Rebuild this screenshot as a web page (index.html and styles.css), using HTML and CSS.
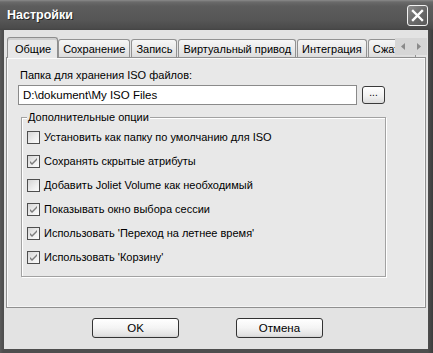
FILE: index.html
```html
<!DOCTYPE html>
<html lang="ru">
<head>
<meta charset="utf-8">
<title>Настройки</title>
<link rel="stylesheet" href="styles.css">
</head>
<body>
<div class="window">
  <div class="titlebar">
    <span class="title">Настройки</span>
    <div class="close">
      <svg width="19" height="19" viewBox="0 0 19 19"><path d="M5 5 L14 14 M14 5 L5 14" stroke="#fff" stroke-width="2.4" stroke-linecap="square"/></svg>
    </div>
  </div>
  <div class="client">
    <div class="tabstrip">
      <div class="tab active">Общие</div>
      <div class="tab">Сохранение</div>
      <div class="tab">Запись</div>
      <div class="tab">Виртуальный привод</div>
      <div class="tab">Интеграция</div>
      <div class="tab">Сжатие</div>
      <div class="tab-scroll">
        <svg width="32" height="17" viewBox="0 0 32 17"><path d="M10 5 L6 8.5 L10 12 Z" fill="#8a8a8a"/><path d="M22 5 L26 8.5 L22 12 Z" fill="#8a8a8a"/></svg>
      </div>
    </div>
    <div class="panel">
      <div class="field-label">Папка для хранения ISO файлов:</div>
      <div class="path-row">
        <div class="input">D:\dokument\My ISO Files</div>
        <div class="browse">...</div>
      </div>
      <div class="group">
        <div class="legend">Дополнительные опции</div>
        <div class="check-row"><span class="box"></span><span>Установить как папку по умолчанию для ISO</span></div>
        <div class="check-row"><span class="box checked"><svg width="11" height="11" viewBox="0 0 11 11"><path d="M2 5 L4 7 L9 2 L9 4 L4 9 L2 7 Z" fill="#7c7c7c"/></svg></span><span>Сохранять скрытые атрибуты</span></div>
        <div class="check-row"><span class="box"></span><span>Добавить Joliet Volume как необходимый</span></div>
        <div class="check-row"><span class="box checked"><svg width="11" height="11" viewBox="0 0 11 11"><path d="M2 5 L4 7 L9 2 L9 4 L4 9 L2 7 Z" fill="#7c7c7c"/></svg></span><span>Показывать окно выбора сессии</span></div>
        <div class="check-row"><span class="box checked"><svg width="11" height="11" viewBox="0 0 11 11"><path d="M2 5 L4 7 L9 2 L9 4 L4 9 L2 7 Z" fill="#7c7c7c"/></svg></span><span>Использовать 'Переход на летнее время'</span></div>
        <div class="check-row"><span class="box checked"><svg width="11" height="11" viewBox="0 0 11 11"><path d="M2 5 L4 7 L9 2 L9 4 L4 9 L2 7 Z" fill="#7c7c7c"/></svg></span><span>Использовать 'Корзину'</span></div>
      </div>
    </div>
    <div class="buttons">
      <div class="btn">OK</div>
      <div class="btn">Отмена</div>
    </div>
  </div>
</div>
</body>
</html>
```

FILE: styles.css
```css
* { box-sizing: border-box; }

html, body {
  margin: 0;
  padding: 0;
}

body {
  width: 433px;
  height: 353px;
  overflow: hidden;
  font-family: "Liberation Sans", Arial, sans-serif;
  font-size: 11px;
  line-height: 13px;
  color: #000;
  background: #4c4c4c;
}

.window {
  height: 353px;
  display: flex;
  flex-direction: column;
  background: linear-gradient(to right, #5a5a5a, #4e4e4e 3px, #4e4e4e 428px, #3c3c3c);
}

.titlebar {
  height: 30px;
  flex: none;
  display: flex;
  align-items: center;
  justify-content: space-between;
  padding: 0 5px 0 7px;
  background: linear-gradient(#8a8a8a 0, #6a6a6a 2px, #5d5d5d 6px, #565656 20px, #4b4b4b 28px, #444 30px);
}

.title {
  color: #fff;
  font-weight: bold;
  font-size: 12.5px;
  text-shadow: 1px 1px 0 #262626;
  margin-top: 1px;
}

.close {
  width: 21px;
  height: 21px;
  border: 1px solid #f2f2f2;
  border-radius: 3px;
  background: linear-gradient(135deg, #8c8c8c, #6a6a6a 50%, #5a5a5a);
  display: flex;
  align-items: center;
  justify-content: center;
}

.close svg { display: block; }

.client {
  flex: 1;
  margin: 0 5px 4px 4px;
  background: #e3e3e3;
  display: flex;
  flex-direction: column;
  padding: 7px 2px 0 2px;
}

.tabstrip {
  height: 21px;
  margin-bottom: -1px;
  padding-left: 1px;
  display: flex;
  align-items: flex-start;
  position: relative;
  z-index: 1;
  overflow: hidden;
  margin-right: -1px;
}

.tab {
  flex: none;
  height: 18px;
  margin-top: 2px;
  margin-right: 1px;
  padding: 3px 4px 0 4px;
  border: 1px solid #929292;
  border-bottom: none;
  border-radius: 3px 3px 0 0;
  background: linear-gradient(#f6f6f6, #e6e6e6 70%, #dcdcdc);
  white-space: nowrap;
}

.tab.active {
  height: 21px;
  margin-top: 0;
  padding: 5px 6px 0 7px;
  margin-right: 0;
  background: #e8e8e8;
  border-color: #8e8e8e;
  box-shadow: inset 0 2px 0 #cfcfcf;
}

.tab.active + .tab { margin-left: 0; }

.tab-scroll {
  position: absolute;
  right: 0;
  top: 1px;
  width: 32px;
  height: 17px;
  background: #d6d6d6;
}

.tab-scroll svg { display: block; }

.panel {
  height: 251px;
  border: 1px solid #8f8f8f;
  box-shadow: inset 1px 1px 0 #fafafa, inset -1px -1px 0 #f4f4f4;
  background: #e8e8e8;
  padding: 11px 0 0 11px;
}

.field-label {
  padding-left: 2px;
  height: 13px;
}

.path-row {
  display: flex;
  align-items: flex-start;
  margin-top: 3px;
}

.input {
  width: 339px;
  height: 20px;
  background: #fff;
  border: 1px solid #8a8a8a;
  padding: 3px 0 0 4px;
  font-size: 11.5px;
}

.browse {
  width: 23px;
  height: 18px;
  margin: 1px 0 0 5px;
  border: 1px solid #3a3a3a;
  border-radius: 3px;
  background: linear-gradient(#ffffff, #f0f0f0 60%, #dcdcdc);
  text-align: center;
  line-height: 12px;
  font-size: 10px;
}

.group {
  width: 365px;
  height: 160px;
  margin: 12px 0 0 3px;
  border: 1px solid #a2a2a2;
  box-shadow: inset 1px 1px 0 #fff, 1px 1px 0 #fff;
  padding: 0 5px;
}

.legend {
  margin-top: -7px;
  width: fit-content;
  padding: 0 1px;
  background: #e8e8e8;
  height: 13px;
  margin-bottom: 1px;
}

.check-row {
  height: 24px;
  display: flex;
  align-items: center;
  gap: 4px;
}

.box {
  width: 13px;
  height: 13px;
  flex: none;
  border: 1px solid #4e4e4e;
  background: linear-gradient(135deg, #d6d6d6, #efefef 60%, #fcfcfc);
  display: flex;
  align-items: center;
  justify-content: center;
}

.box svg { display: block; }

.buttons {
  margin-top: 10px;
  display: flex;
  gap: 57px;
  padding-left: 86px;
}

.btn {
  width: 87px;
  height: 20px;
  border: 1px solid #333;
  border-radius: 3px;
  background: linear-gradient(#ffffff, #f4f4f4 50%, #e2e2e2 90%, #d2d2d2);
  text-align: center;
  line-height: 18px;
  font-size: 11.5px;
}
```
